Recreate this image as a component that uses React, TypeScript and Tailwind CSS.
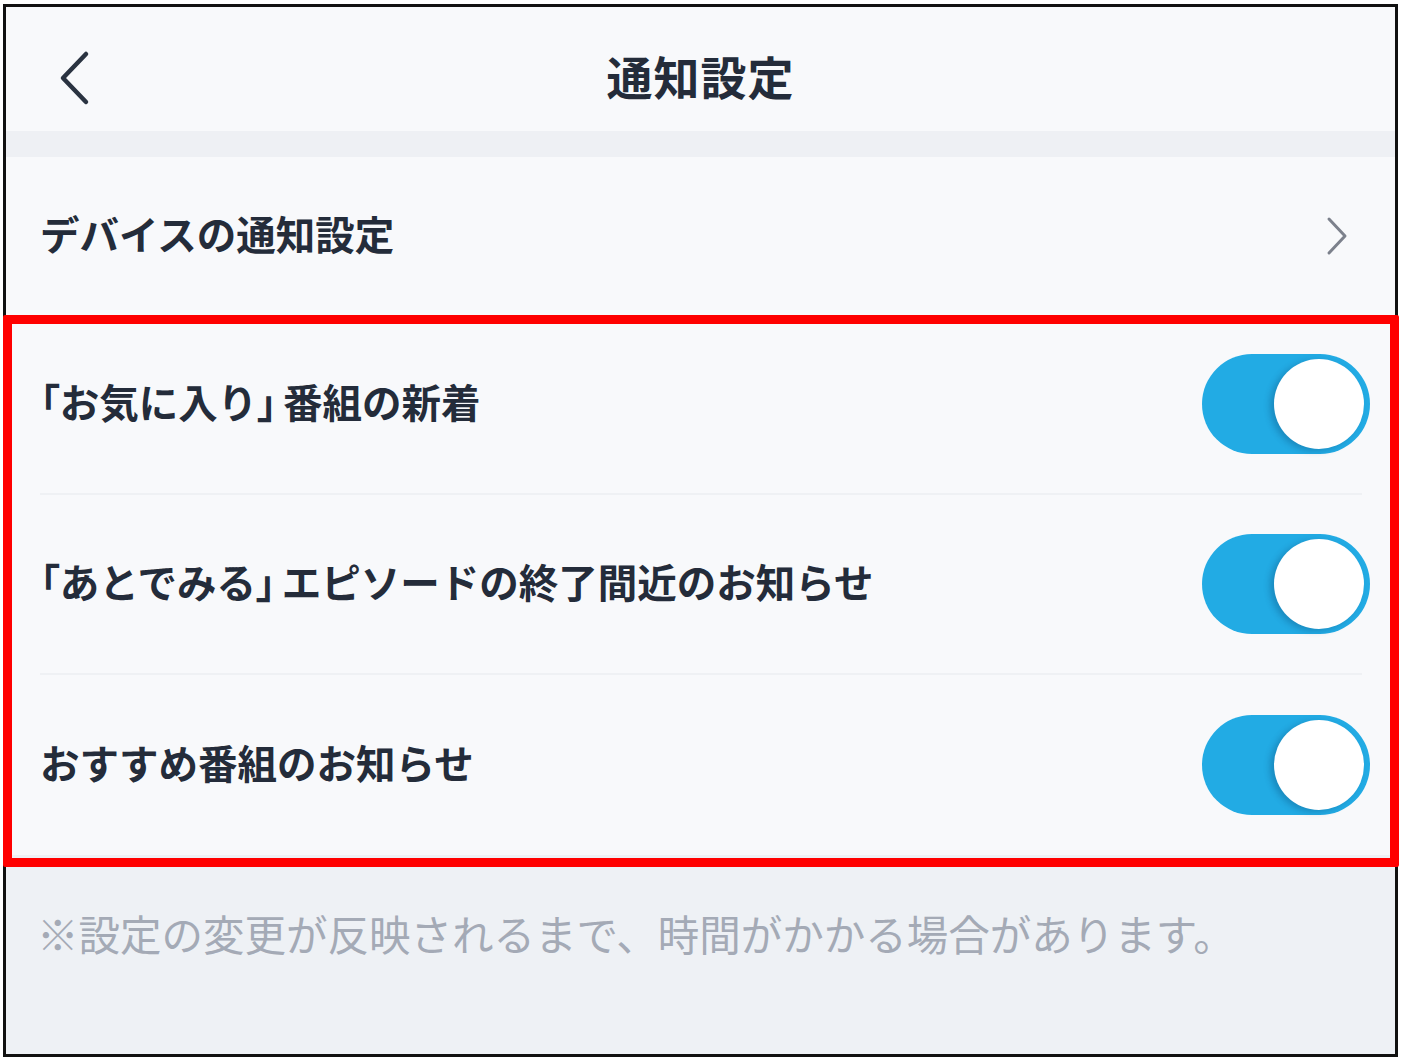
const ROWS: [string, string, string][] = [
  ["「", "お気に入り", "」番組の新着"],
  ["「", "あとでみる", "」エピソードの終了間近のお知らせ"],
  ["", "おすすめ番組のお知らせ", ""],
];

function Toggle() {
  return (
    <div className="flex h-[100px] w-[168px] shrink-0 items-center justify-end rounded-full bg-[#22abe4] pr-[6px]">
      <div className="h-[90px] w-[90px] rounded-full bg-white shadow-[-4px_2px_6px_rgba(0,40,80,0.25)]" />
    </div>
  );
}

function Label({ parts }: { parts: [string, string, string] }) {
  const [open, body, rest] = parts;
  const close = rest.slice(0, 1);
  const tail = rest.slice(1);
  return (
    <span className="pb-[6px] text-[39.5px] font-bold text-[#242c3a]">
      {open && <span className="[font-feature-settings:'palt']">{open}</span>}
      {body}
      {close && <span className="mr-[6px] [font-feature-settings:'palt']">{close}</span>}
      {tail}
    </span>
  );
}

export default function App() {
  return (
    <div
      className="h-[1058px] w-[1402px] bg-white pl-[3px] pt-[4px]"
      style={{ fontFamily: '"Noto Sans CJK JP", "Noto Sans", sans-serif' }}
    >
      <div className="flex h-[1053px] w-[1395px] flex-col border-[3px] border-[#111111] bg-[#f8f9fb]">
        {/* Header */}
        <div className="relative flex h-[124px] shrink-0 items-center justify-center">
          <svg
            className="absolute left-[47px] top-[43px]"
            width="40"
            height="56"
            viewBox="0 0 40 56"
            fill="none"
          >
            <path d="M33 4 L10 28 L33 52" stroke="#2a3341" strokeWidth="4.5" strokeLinecap="round" strokeLinejoin="round" />
          </svg>
          <h1 className="pt-[12px] text-[46px] font-bold tracking-[1px] text-[#242c3a]">通知設定</h1>
        </div>

        <div className="h-[26px] shrink-0 bg-[#eef0f4]" />

        {/* Device settings */}
        <div className="flex h-[158px] shrink-0 items-center justify-between pl-[34px] pr-[46px]">
          <span className="pb-[6px] text-[39.5px] font-bold text-[#242c3a]">デバイスの通知設定</span>
          <svg width="24" height="40" viewBox="0 0 24 40" fill="none">
            <path d="M4 3 L20 20 L4 37" stroke="#7c818c" strokeWidth="3" strokeLinecap="round" strokeLinejoin="round" />
          </svg>
        </div>

        {/* Toggle rows */}
        <div className="relative shrink-0">
          {ROWS.map((parts, i) => (
            <div key={parts[1]} className="pl-[34px] pr-[33px]">
              <div
                className={
                  i < ROWS.length - 1
                    ? "flex h-[180px] items-center justify-between border-b-2 border-[#eff1f4]"
                    : "flex h-[180px] items-center justify-between"
                }
              >
                <Label parts={parts} />
                <div className="-mr-[8px]">
                  <Toggle />
                </div>
              </div>
            </div>
          ))}
          <div className="pointer-events-none absolute -bottom-[12px] -left-[3px] -right-[4px] top-0 rounded-[2px] border-[9px] border-[#ff0000]" />
        </div>

        {/* Footer */}
        <div className="flex-1 bg-[#eef1f5] pl-[31px] pt-[52px]">
          <p className="text-[41.5px] leading-[52px] text-[#a4aab6]">
            <span className="[font-feature-settings:'palt']">※</span>
            設定の変更が反映されるまで、時間がかかる場合があります。
          </p>
        </div>
      </div>
    </div>
  );
}
